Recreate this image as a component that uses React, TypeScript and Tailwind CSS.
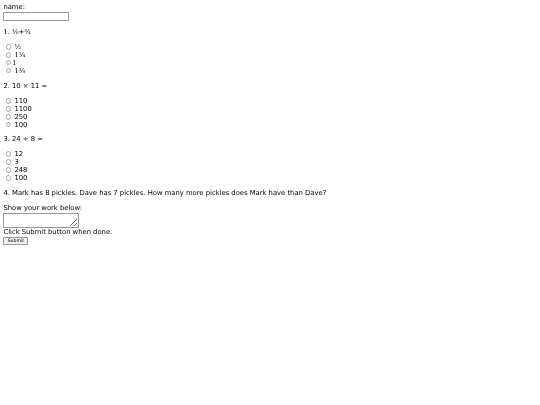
import React from "react";

function Opt({ name, label, space = true }: { name: string; label: string; space?: boolean }) {
  return (
    <div className="h-[18.6px] leading-[18.6px]">
      <input
        type="radio"
        name={name}
        className="m-[0_3px_0_5px] inline-block h-[13px] w-[13px] appearance-none rounded-full border border-[#a8a8a8] bg-white align-[-1px]"
      />
      {space ? " " + label : label}
    </div>
  );
}

export default function App() {
  return (
    <div className="[will-change:transform]">
      <div className="[zoom:0.425] px-[8px] pt-[10px] pb-[8px] text-[16px] leading-[17.65px] text-black font-['DejaVu_Sans',Verdana,sans-serif]">
        name:
        <br />
        <input
          type="text"
          className="mb-[2.4px] h-[21px] w-[155px] rounded-[2px] border border-[#9a9a9a] bg-white px-[2px] py-[1px] text-[13.33px] align-baseline"
        />
        <br />
        <br />
        <div className="font-['DejaVu_Serif',serif]">
          1. ⅛+¾
          <br />
          <br />
          <Opt name="q1" label="½" />
          <Opt name="q1" label="1¼" />
          <Opt name="q1" label="1" space={false} />
          <Opt name="q1" label="1⅜" />
        </div>
        <br />
        2. 10 × 11 =
        <br />
        <br />
        <Opt name="q2" label="110" />
        <Opt name="q2" label="1100" />
        <Opt name="q2" label="250" />
        <Opt name="q2" label="100" />
        <div className="h-[15.3px]" />
        3. 24 ÷ 8 =
        <br />
        <br />
        <Opt name="q3" label="12" />
        <Opt name="q3" label="3" />
        <Opt name="q3" label="248" />
        <Opt name="q3" label="100" />
        <br />
        4. Mark has 8 pickles. Dave has 7 pickles. How many more pickles does Mark have than Dave?
        <br />
        <br />
        Show your work below:
        <br />
        <textarea
          rows={2}
          className="mb-[3px] h-[35px] w-[179px] rounded-[2px] border border-[#9a9a9a] bg-white align-top"
        />
        <br />
        Click Submit button when done.
        <br />
        <button className="h-[19px] w-[59px] rounded-[2px] border border-[#9a9a9a] bg-[#efefef] text-[11px] leading-[15px] align-baseline">
          Submit
        </button>
      </div>
    </div>
  );
}
